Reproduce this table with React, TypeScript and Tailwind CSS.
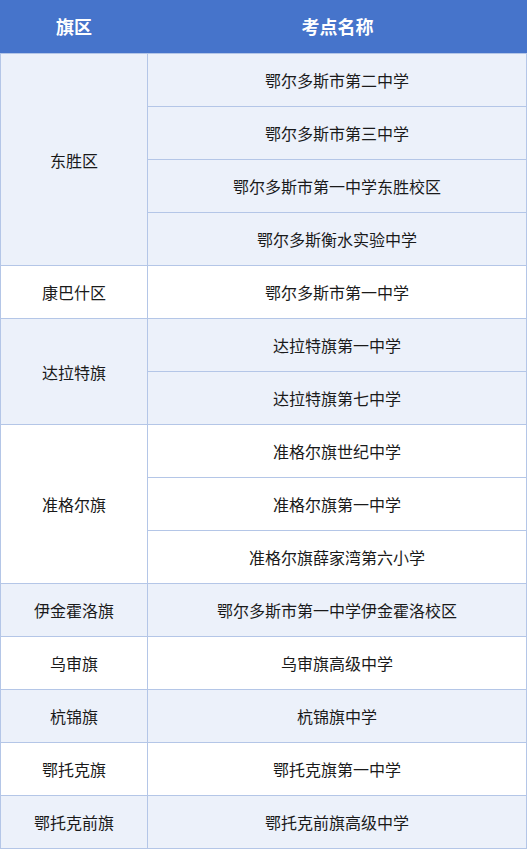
const groups: { district: string; schools: string[]; shaded: boolean }[] = [
  { district: "东胜区", shaded: true, schools: ["鄂尔多斯市第二中学", "鄂尔多斯市第三中学", "鄂尔多斯市第一中学东胜校区", "鄂尔多斯衡水实验中学"] },
  { district: "康巴什区", shaded: false, schools: ["鄂尔多斯市第一中学"] },
  { district: "达拉特旗", shaded: true, schools: ["达拉特旗第一中学", "达拉特旗第七中学"] },
  { district: "准格尔旗", shaded: false, schools: ["准格尔旗世纪中学", "准格尔旗第一中学", "准格尔旗薛家湾第六小学"] },
  { district: "伊金霍洛旗", shaded: true, schools: ["鄂尔多斯市第一中学伊金霍洛校区"] },
  { district: "乌审旗", shaded: false, schools: ["乌审旗高级中学"] },
  { district: "杭锦旗", shaded: true, schools: ["杭锦旗中学"] },
  { district: "鄂托克旗", shaded: false, schools: ["鄂托克旗第一中学"] },
  { district: "鄂托克前旗", shaded: true, schools: ["鄂托克前旗高级中学"] },
]

export default function App() {
  return (
    <div
      className="w-[527px] bg-white text-[16px] text-[#1a1a1a]"
      style={{ fontFamily: '"Noto Sans CJK SC", "Noto Sans", sans-serif' }}
    >
      <div className="flex h-[53px] bg-[#4674cb] text-[18px] font-bold text-white">
        <div className="flex w-[148px] items-center justify-center">旗区</div>
        <div className="flex flex-1 items-center justify-center">考点名称</div>
      </div>
      <div className="border-t border-l border-r border-[#b4c6e7]">
        {groups.map((g) => (
          <div
            key={g.district}
            className={`flex border-b border-[#b4c6e7] ${g.shaded ? "bg-[#ecf1fa]" : "bg-white"}`}
          >
            <div className="flex w-[147px] shrink-0 items-center justify-center border-r border-[#b4c6e7]">
              {g.district}
            </div>
            <div className="flex flex-1 flex-col">
              {g.schools.map((s, i) => (
                <div
                  key={s}
                  className={`flex h-[52px] items-center justify-center ${i > 0 ? "h-[53px] border-t border-[#b4c6e7]" : ""}`}
                >
                  {s}
                </div>
              ))}
            </div>
          </div>
        ))}
      </div>
    </div>
  )
}
